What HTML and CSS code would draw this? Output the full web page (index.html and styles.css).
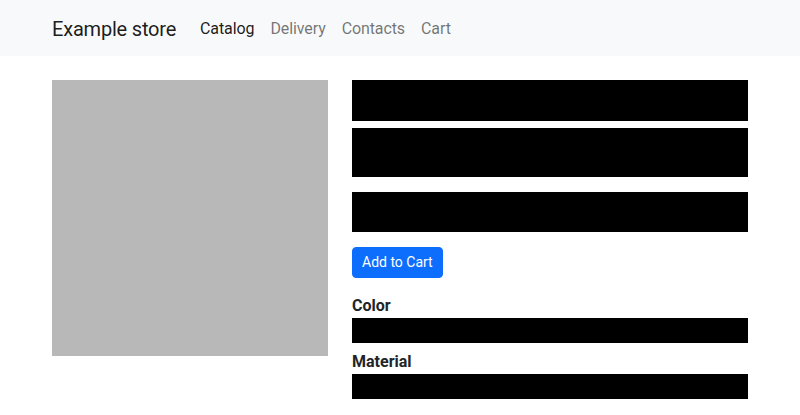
FILE: index.html
```html
<!DOCTYPE html>
<html lang="en">
<head>
<meta charset="utf-8">
<title>Example store</title>
<link rel="stylesheet" href="styles.css">
</head>
<body>
<nav class="navbar">
  <div class="container nav-inner">
    <a class="brand" href="#">Example store</a>
    <ul class="nav-links">
      <li><a class="nav-link active" href="#">Catalog</a></li>
      <li><a class="nav-link" href="#">Delivery</a></li>
      <li><a class="nav-link" href="#">Contacts</a></li>
      <li><a class="nav-link" href="#">Cart</a></li>
    </ul>
  </div>
</nav>
<main class="container product">
  <div class="photo"></div>
  <div class="details">
    <div class="bar bar-title"></div>
    <div class="bar bar-desc"></div>
    <div class="bar bar-price"></div>
    <button class="btn" type="button">Add to Cart</button>
    <div class="field">
      <div class="label">Color</div>
      <div class="bar bar-option"></div>
    </div>
    <div class="field">
      <div class="label">Material</div>
      <div class="bar bar-option"></div>
    </div>
  </div>
</main>
</body>
</html>
```
FILE: styles.css
```css
* { box-sizing: border-box; }
html, body { margin: 0; padding: 0; }
body {
  font-family: Roboto, "Open Sans", sans-serif;
  font-size: 16px;
  line-height: 1.5;
  color: #212529;
  background: #fff;
}
.container {
  width: 720px;
  margin: 0 auto;
  padding: 0 12px;
}
.navbar {
  background: #f8f9fa;
  padding: 8px 0;
}
.nav-inner {
  display: flex;
  align-items: center;
}
.brand {
  font-size: 20px;
  line-height: 30px;
  padding: 6px 0 4px;
  margin-right: 16px;
  letter-spacing: -0.2px;
  color: rgba(0,0,0,.9);
  text-decoration: none;
}
.nav-links {
  display: flex;
  list-style: none;
  margin: 0;
  padding: 0;
}
.nav-link {
  display: block;
  padding: 9px 8px 7px;
  letter-spacing: -0.1px;
  color: rgba(0,0,0,.55);
  text-decoration: none;
}
.nav-link.active { color: rgba(0,0,0,.9); }
.product {
  display: flex;
  gap: 24px;
  margin-top: 24px;
  align-items: flex-start;
}
.photo {
  width: 276px;
  height: 276px;
  background: #b8b8b8;
  flex: none;
}
.details {
  flex: 1;
  display: flex;
  flex-direction: column;
  align-items: flex-start;
}
.bar { background: #000; width: 100%; }
.bar-title { height: 41px; }
.bar-desc { height: 49px; margin-top: 7px; }
.bar-price { height: 40px; margin-top: 15px; }
.btn {
  margin-top: 15px;
  font-family: inherit;
  font-size: 14px;
  line-height: 21px;
  padding: 4px 9px;
  color: #fff;
  background: #0d6efd;
  border: 1px solid #0d6efd;
  border-radius: 4px;
}
.field { width: 100%; }
.btn + .field { margin-top: 16px; }
.field + .field { margin-top: 7px; }
.label {
  font-weight: 700;
  line-height: 24px;
}
.bar-option { height: 25px; }
```
